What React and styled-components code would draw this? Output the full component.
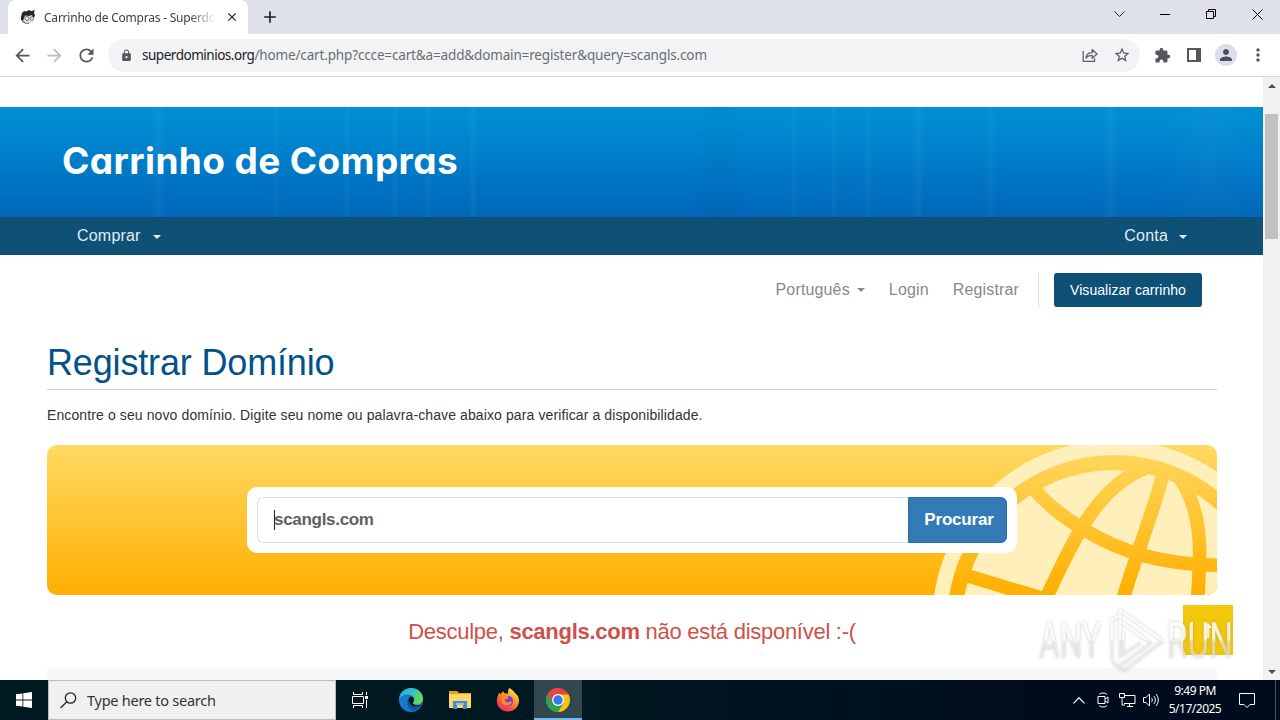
import React from "react";
import styled, { createGlobalStyle } from "styled-components";
import {
  MdArrowBack,
  MdArrowForward,
  MdRefresh,
  MdLock,
  MdStarOutline,
  MdExtension,
  MdPerson,
  MdMoreVert,
  MdAdd,
  MdClose,
} from "react-icons/md";

const GlobalStyle = createGlobalStyle`
  * {
    box-sizing: border-box;
  }
  body {
    margin: 0;
    overflow: hidden;
    background: #fff;
    font-family: "Liberation Sans", Arial, sans-serif;
  }
`;

const Screen = styled.div`
  position: relative;
  width: 1280px;
  height: 720px;
  display: flex;
  flex-direction: column;
  overflow: hidden;
`;

/* browser */
const TitleBar = styled.div`
  height: 34px;
  flex: none;
  display: flex;
  padding-left: 8px;
  background: #dee1e8;
  color: #202124;
`;
const Tab = styled.div`
  width: 240px;
  height: 34px;
  display: flex;
  align-items: center;
  padding-left: 12px;
  background: #fff;
  border-radius: 8px 8px 0 0;
`;
const TabTitle = styled.div`
  width: 172px;
  margin-left: 8px;
  white-space: nowrap;
  font-family: "Noto Sans", sans-serif;
  font-size: 12px;
  letter-spacing: -0.22px;
  color: #3c4043;
  -webkit-mask-image: linear-gradient(to right, #000 145px, transparent 172px);
  mask-image: linear-gradient(to right, #000 145px, transparent 172px);
`;
const TabClose = styled.div`
  width: 16px;
  height: 16px;
  margin-left: 8px;
  display: flex;
  align-items: center;
  justify-content: center;
`;
const NewTab = styled.div`
  width: 28px;
  margin-left: 8px;
  display: flex;
  align-items: center;
  justify-content: center;
`;
const WindowButtons = styled.div`
  height: 28px;
  margin-left: auto;
  display: flex;
`;
const WindowButton = styled.div`
  width: 46px;
  display: flex;
  align-items: center;
  justify-content: center;
`;
const Toolbar = styled.div`
  height: 43px;
  flex: none;
  display: flex;
  align-items: center;
  padding: 0 6px;
  background: #fff;
  border-bottom: 1px solid #d9dadd;
`;
const Cell = styled.div`
  width: 32px;
  height: 32px;
  flex: none;
  display: flex;
  align-items: center;
  justify-content: center;
  color: ${(props) => props.$color || "#54575c"};
`;
const AddressBar = styled.div`
  height: 33px;
  flex: 1;
  margin: 0 6px;
  padding-right: 2px;
  display: flex;
  align-items: center;
  border-radius: 17px;
  background: #f1f3f4;
`;
const Lock = styled(Cell)`
  width: 34px;
  padding-left: 2px;
`;
const Url = styled.div`
  flex: 1;
  white-space: nowrap;
  font-family: "Noto Sans", sans-serif;
  font-size: 13.5px;
  letter-spacing: -0.15px;
  color: #6a6e73;

  span {
    letter-spacing: -0.48px;
    color: #202124;
  }
`;
const Avatar = styled.div`
  width: 22px;
  height: 22px;
  display: flex;
  align-items: center;
  justify-content: center;
  border-radius: 50%;
  background: #dcdfe8;
  color: #4b4f66;
`;

/* page */
const Viewport = styled.div`
  height: 603px;
  flex: none;
  display: flex;
`;
const Page = styled.div`
  width: 1263px;
  padding-top: 30px;
  overflow: hidden;
  background: #fff;
`;
const Scrollbar = styled.div`
  width: 17px;
  display: flex;
  flex-direction: column;
  align-items: center;
  background: #f1f1f1;
`;
const ScrollArrow = styled.div`
  height: 17px;
  display: flex;
  align-items: center;
`;
const Thumb = styled.div`
  width: 13px;
  height: 125px;
  margin-top: 20px;
  margin-bottom: auto;
  background: #c1c1c1;
`;
const Hero = styled.div`
  height: 110px;
  padding: 27px 62px;
  background:
    linear-gradient(to right, transparent 150px, #ffffff08 156px, #ffffff08 160px, transparent 166px, transparent 272px, #ffffff09 276px, transparent 280px, transparent 344px, #ffffff0a 347px, transparent 350px, transparent 392px, #ffffff0b 395px, transparent 398px, transparent 424px, #ffffff0a 428px, transparent 432px, transparent 468px, #ffffff0b 473px, transparent 478px, transparent 690px, #00000006 720px, transparent 750px, transparent 790px, #ffffff0a 794px, transparent 798px, transparent 830px, #ffffff0b 834px, transparent 838px, transparent 862px, #ffffff08 868px, transparent 874px, transparent 912px, #ffffff0c 918px, transparent 924px, transparent 984px, #ffffff09 990px, transparent 996px, transparent 1102px, #ffffff0b 1110px, transparent 1118px, transparent 1160px, #ffffff06 1210px, transparent 1263px),
    linear-gradient(to bottom, #0090d3 0%, #0082cc 38%, #0072c2 72%, #0067b7 100%);
`;
const HeroTitle = styled.h1`
  margin: 0;
  font-family: Inter, sans-serif;
  font-size: 37px;
  line-height: 54px;
  font-weight: 700;
  font-feature-settings: "cv11";
  letter-spacing: 0.4px;
  white-space: nowrap;
  color: #fff;
`;
const Nav = styled.div`
  height: 38px;
  display: flex;
  align-items: center;
  justify-content: space-between;
  padding: 0 76px 0 77px;
  background: #0f5077;
`;
const NavItem = styled.div`
  display: flex;
  align-items: center;
  font-size: 16px;
  letter-spacing: 0.2px;
  color: #e2eef5;
`;
const Caret = styled.span`
  margin-left: ${(props) => props.$gap};
  margin-top: ${(props) => props.$drop || "0"};
  border-top: 4px solid;
  border-left: 4px solid transparent;
  border-right: 4px solid transparent;
`;
const Container = styled.div`
  width: 1170px;
  margin-left: 47px;
`;
const UserMenu = styled.div`
  height: 70px;
  display: flex;
  align-items: center;
  justify-content: flex-end;
  padding-right: 15px;
`;
const MenuItem = styled.div`
  display: flex;
  align-items: center;
  margin-right: ${(props) => props.$gap};
  font-size: 16px;
  letter-spacing: 0.15px;
  color: #888;
`;
const Divider = styled.div`
  width: 1px;
  height: 34px;
  background: #ddd;
`;
const CartButton = styled.button`
  width: 148px;
  height: 34px;
  margin-left: 15px;
  padding: 0;
  border: none;
  border-radius: 3px;
  background: #0f5077;
  font-family: inherit;
  font-size: 14px;
  letter-spacing: 0.05px;
  color: #fff;
`;
const Heading = styled.h1`
  height: 65px;
  margin: 0;
  padding-top: 17px;
  border-bottom: 1px solid #ccc;
  font-size: 36px;
  line-height: 41px;
  font-weight: 400;
  letter-spacing: -0.16px;
  color: #02528a;
`;
const Intro = styled.p`
  margin: 15px 0 20px;
  font-size: 14px;
  line-height: 20px;
  letter-spacing: 0.11px;
  color: #333;
`;
const Banner = styled.div`
  position: relative;
  height: 150px;
  display: flex;
  align-items: center;
  justify-content: center;
  border-radius: 10px;
  overflow: hidden;
  background: linear-gradient(to bottom, #ffd963, #ffaf00);
`;
const Globe = styled.svg`
  position: absolute;
  right: 0;
  top: 0;
`;
const SearchBox = styled.div`
  position: relative;
  width: 770px;
  height: 66px;
  display: flex;
  padding: 10px;
  border-radius: 10px;
  background: #fff;
`;
const SearchField = styled.div`
  flex: 1;
  display: flex;
  align-items: center;
  padding-left: 16px;
  border: 1px solid #ddd;
  border-right: none;
  border-radius: 6px 0 0 6px;
  font-size: 17px;
  font-weight: 700;
  letter-spacing: -0.3px;
  color: #606060;
`;
const TextCursor = styled.span`
  width: 1px;
  height: 20px;
  margin-right: -1px;
  background: #222;
`;
const SearchButton = styled.button`
  width: 99px;
  padding: 0 0 0 3px;
  border: 1px solid #2e6da4;
  border-radius: 0 6px 6px 0;
  background: #337ab7;
  font-family: inherit;
  font-size: 17px;
  font-weight: 700;
  letter-spacing: -0.2px;
  color: #fff;
`;
const Result = styled.p`
  margin: 20px 0 0;
  text-align: center;
  font-size: 22px;
  line-height: 34px;
  letter-spacing: -0.27px;
  color: #d0504c;
`;
const Panel = styled.div`
  height: 20px;
  margin-top: 19px;
  background: #f7f7f7;
`;
const BackToTop = styled.div`
  position: absolute;
  left: 1183px;
  top: 605px;
  width: 50px;
  height: 50px;
  display: flex;
  align-items: center;
  justify-content: center;
  background: #f2c70c;
`;
const Watermark = styled.svg`
  position: absolute;
  left: 1030px;
  top: 600px;
  overflow: visible;

  text {
    font-family: Roboto, sans-serif;
    font-size: 50px;
    font-weight: 400;
  }
`;

/* taskbar */
const Taskbar = styled.div`
  height: 40px;
  flex: none;
  display: flex;
  background: linear-gradient(to right, #001a22, #001820 45%, #000b1d 85%);
  font-family: "Noto Sans", sans-serif;
`;
const TaskButton = styled.div`
  width: ${(props) => props.$width || "48px"};
  display: flex;
  align-items: center;
  justify-content: center;
  padding-top: ${(props) => (props.$active ? "2px" : "0")};
  background: ${(props) => (props.$active ? "#33474f" : "transparent")};
  border-bottom: ${(props) => (props.$active ? "2px solid #76b9ed" : "none")};
`;
const SearchBar = styled.div`
  width: 288px;
  display: flex;
  align-items: center;
  padding-left: 11px;
  border: 1px solid #bcbcbc;
  background: #f0f0f0;
  font-size: 14.5px;
  letter-spacing: -0.25px;
  color: #333;

  svg {
    margin-right: 10px;
  }
`;
const Tray = styled.div`
  margin-left: auto;
  display: flex;
`;
const Clock = styled.div`
  width: 64px;
  padding-top: 2px;
  font-size: 12px;
  line-height: 18px;
  letter-spacing: -0.5px;
  text-align: center;
  color: #fff;
`;
const ShowDesktop = styled.div`
  width: 5px;
  margin-left: 8px;
  border-left: 1px solid #4a5260;
`;

const Favicon = () => (
  <svg width="16" height="16" viewBox="0 0 16 16">
    <path d="M3 7l9-1 2 3-1 4-4 2-6-1z" fill="#ead9cc" />
    <path d="M1 8L2 4l2-2 2 .5L9 1l2 1 4-1-1 2 1 4-2 2-1-3-3 1-4-.5L4 9l-1 3-2-1z" fill="#24272b" />
    <circle cx="7" cy="9.5" r="2" fill="#e8f1f7" stroke="#4a5e70" strokeWidth=".8" />
    <circle cx="12" cy="9.5" r="1.7" fill="#e8f1f7" stroke="#4a5e70" strokeWidth=".8" />
    <path d="M2 12l3 2 4 .5" stroke="#637384" strokeWidth="1.2" fill="none" />
  </svg>
);

const ShareIcon = () => (
  <svg width="16" height="16" viewBox="0 0 16 16" fill="none" stroke="#5f6368" strokeWidth="1.3">
    <path d="M1.2 4v10.3h11.3v-3" />
    <path d="M4 11c.4-3.500 2.500-5.300 6.200-5.300V2.500L15 7l-4.800 4.200V8.300C7.500 8.300 5.500 9 4 11z" strokeLinejoin="round" />
  </svg>
);

const GlobeArt = () => (
  <Globe width="287" height="150" viewBox="930 445 287 150">
    <mask id="lines" maskUnits="userSpaceOnUse" x="900" y="430" width="400" height="400">
      <circle cx="1114.2" cy="622" r="152" fill="#fff" />
      <g transform="translate(900 430) scale(.33333)" fill="none" stroke="#000" strokeWidth="41">
        <path d="M385 158C440 225 490 260 550 298C660 365 780 404 960 406" />
        <path d="M750 108C650 145 595 215 545 293C505 360 475 425 438 505" />
        <path d="M790 130C765 230 720 340 668 510" />
        <path d="M800 105C885 170 900 300 899 375C898 425 896 460 893 505" />
        <path d="M185 432L430 506" />
      </g>
    </mask>
    <circle cx="1114.2" cy="622" r="174.500" fill="none" stroke="#fff0bb" strokeWidth="15" />
    <rect x="930" y="445" width="287" height="150" fill="#fff0bb" mask="url(#lines)" />
  </Globe>
);

const WatermarkArt = () => (
  <Watermark width="215" height="80" viewBox="0 0 215 80">
    <defs>
      <linearGradient id="fade" gradientUnits="userSpaceOnUse" x1="0" y1="8" x2="0" y2="72">
        <stop offset=".48" stopColor="#fff" stopOpacity=".8" />
        <stop offset=".54" stopColor="#e6e6e6" stopOpacity=".6" />
      </linearGradient>
      <filter id="glow" x="-20%" y="-20%" width="140%" height="140%">
        <feDropShadow dx="0" dy="0" stdDeviation="1.500" floodColor="#777" floodOpacity=".5" />
      </filter>
    </defs>
    <g filter="url(#glow)" fill="url(#fade)">
      <text x="9" y="58" textLength="62" lengthAdjust="spacingAndGlyphs">ANY</text>
      <text x="137" y="58" textLength="66" lengthAdjust="spacingAndGlyphs">RUN</text>
      <g fill="none" stroke="url(#fade)" strokeWidth="2.500" strokeLinejoin="round">
        <path d="M82 60V20L88 16" />
        <path d="M90 58V10L133 41L94 71L82 62" />
        <path d="M90 21L121 43L90 66" />
        <path d="M93 31V55L110 43" />
      </g>
    </g>
  </Watermark>
);

const EdgeIcon = () => (
  <svg width="24" height="24" viewBox="0 0 24 24">
    <defs>
      <linearGradient id="edgeTop" x1="0" y1="0" x2="1" y2=".4">
        <stop offset="0" stopColor="#2aa7e0" />
        <stop offset=".6" stopColor="#36c5c0" />
        <stop offset="1" stopColor="#62d957" />
      </linearGradient>
    </defs>
    <circle cx="12" cy="12" r="12" fill="#1479cf" />
    <path d="M0 11C1 4 6 0 12 0c7 0 12 5 12 10.500 0 4-3 6-6.500 6-2.500 0-4-1-3.500-2.200.8-1.300 1-2 1-3C15 8.500 12 6.500 8.500 6.500 4.500 6.500 1.500 8.500 0 11z" fill="url(#edgeTop)" />
    <path d="M10 10c-3 3-2.500 9 3 12.500 3-.2 6.500-1.500 9-5-5 2.500-12 1.500-12-7.500z" fill="#11549c" />
    <path d="M15 11.500c0-2.300-2-3.500-3.500-3-2 .8-2.500 4-1 6.500 1.500 2.800 5 4 8 3.500 2-.2 3.500-1 4.500-2-3 1.500-10 1-9-2 .6-1 1-2 1-3z" fill="#001820" />
  </svg>
);

const FolderIcon = () => (
  <svg width="22" height="20" viewBox="0 0 22 20">
    <path d="M0 1h8l2 2h12v4H0z" fill="#e9a01f" />
    <path d="M0 4h22v14H0z" fill="#fcd667" />
    <path d="M4 11h14v8h-4v-4H8v4H4z" fill="#3c8fd0" />
    <path d="M7 13h8v2H7z" fill="#89c8ee" />
  </svg>
);

const FirefoxIcon = () => (
  <svg width="24" height="24" viewBox="0 0 24 24">
    <defs>
      <linearGradient id="fox" x1=".8" y1="0" x2=".2" y2="1">
        <stop offset="0" stopColor="#fff04a" />
        <stop offset=".4" stopColor="#ff9a1f" />
        <stop offset=".75" stopColor="#ff4646" />
        <stop offset="1" stopColor="#f0296d" />
      </linearGradient>
    </defs>
    <path d="M13 0c3 1 4.500 3 6 5 3 2 4 5 4 8-.3 6.300-5 10.500-11 10.500S.8 19 .8 13C.8 9.500 2 7 3.500 4.500l1 2C5.500 4.500 6.500 4 7.500 3l.5 2.500c1.500-.5 3 0 4 .5 0-2 .2-4.500 1-6z" fill="url(#fox)" />
    <circle cx="12" cy="13" r="5.200" fill="#7a42d8" />
    <path d="M6 7c3-.5 5 .5 6.500 2L11 11c-2 0-2.500.7-2 2 .8 1.500 3 2 4.500.8 1-.7 2-.4 2.500.2-1 3-4.500 4.500-7.500 3C5 15.500 4.500 11 6 7z" fill="#ff8b24" />
  </svg>
);

const ChromeIcon = () => (
  <svg width="24" height="24" viewBox="0 0 24 24">
    <path d="M12 12V24A12 12 0 0 1 1.610 6z" fill="#31a350" />
    <path d="M12 6h10.390A12 12 0 0 1 12 24l5.200-9z" fill="#fbc116" />
    <path d="M1.610 6L6.800 15l10.400 0L12 24A12 12 0 0 1 1.610 6z" fill="#31a350" />
    <path d="M12 6.500h10.600A12 12 0 0 0 1.610 6L6.800 15z" fill="#e8453c" />
    <circle cx="12" cy="12" r="5.900" fill="#fff" />
    <circle cx="12" cy="12" r="4.700" fill="#3179ed" />
  </svg>
);

const App = () => {
  return (
    <Screen>
      <GlobalStyle />
      <TitleBar>
        <Tab>
          <Favicon />
          <TabTitle>Carrinho de Compras - Superdo</TabTitle>
          <TabClose>
            <MdClose size={14} />
          </TabClose>
        </Tab>
        <NewTab>
          <MdAdd size={20} />
        </NewTab>
        <WindowButtons>
          <WindowButton>
            <svg width="11" height="7" fill="none" stroke="#222">
              <path d="M.5.5l5 5 5-5" />
            </svg>
          </WindowButton>
          <WindowButton>
            <svg width="10" height="1">
              <path d="M0 0h10v1H0z" />
            </svg>
          </WindowButton>
          <WindowButton>
            <svg width="10" height="10" fill="none" stroke="#000">
              <path d="M.5 2.500h7v7h-7zM2.500 2.500v-2h7v7h-2" />
            </svg>
          </WindowButton>
          <WindowButton>
            <svg width="11" height="11" fill="none" stroke="#000">
              <path d="M.5.5l10 10M10.500.5l-10 10" />
            </svg>
          </WindowButton>
        </WindowButtons>
      </TitleBar>
      <Toolbar>
        <Cell>
          <MdArrowBack size={21} />
        </Cell>
        <Cell $color="#bcbdc0">
          <MdArrowForward size={21} />
        </Cell>
        <Cell>
          <MdRefresh size={21} />
        </Cell>
        <AddressBar>
          <Lock>
            <MdLock size={13} />
          </Lock>
          <Url>
            <span>superdominios.org</span>
            /home/cart.php?ccce=cart&amp;a=add&amp;domain=register&amp;query=scangls.com
          </Url>
          <Cell>
            <ShareIcon />
          </Cell>
          <Cell>
            <MdStarOutline size={18} />
          </Cell>
        </AddressBar>
        <Cell>
          <MdExtension size={17} />
        </Cell>
        <Cell>
          <svg width="14" height="14" fill="#54575c">
            <path d="M0 0h14v14H0zM2 2v10h7V2z" fillRule="evenodd" />
          </svg>
        </Cell>
        <Cell>
          <Avatar>
            <MdPerson size={18} />
          </Avatar>
        </Cell>
        <Cell>
          <MdMoreVert size={20} />
        </Cell>
      </Toolbar>

      <Viewport>
        <Page>
          <Hero>
            <HeroTitle>Carrinho de Compras</HeroTitle>
          </Hero>
          <Nav>
            <NavItem>
              Comprar
              <Caret $gap="12px" $drop="2px" />
            </NavItem>
            <NavItem>
              Conta
              <Caret $gap="11px" $drop="2px" />
            </NavItem>
          </Nav>
          <Container>
            <UserMenu>
              <MenuItem $gap="24px">
                Português
                <Caret $gap="7px" />
              </MenuItem>
              <MenuItem $gap="24px">Login</MenuItem>
              <MenuItem $gap="19px">Registrar</MenuItem>
              <Divider />
              <CartButton>Visualizar carrinho</CartButton>
            </UserMenu>
            <Heading>Registrar Domínio</Heading>
            <Intro>
              Encontre o seu novo domínio. Digite seu nome ou palavra-chave abaixo para verificar a
              disponibilidade.
            </Intro>
            <Banner>
              <GlobeArt />
              <SearchBox>
                <SearchField>
                  <TextCursor />
                  scangls.com
                </SearchField>
                <SearchButton>Procurar</SearchButton>
              </SearchBox>
            </Banner>
            <Result>
              Desculpe, <b>scangls.com</b> não está disponível :-(
            </Result>
            <Panel />
          </Container>
        </Page>
        <Scrollbar>
          <ScrollArrow>
            <svg width="8" height="4" fill="#505050">
              <path d="M0 4l4-4 4 4z" />
            </svg>
          </ScrollArrow>
          <Thumb />
          <ScrollArrow>
            <svg width="8" height="4" fill="#505050">
              <path d="M0 0l4 4 4-4z" />
            </svg>
          </ScrollArrow>
        </Scrollbar>
      </Viewport>

      <BackToTop>
        <svg width="8" height="15" fill="#fff">
          <path d="M4 0l4 5H5.200v10H2.800V5H0z" />
        </svg>
      </BackToTop>
      <WatermarkArt />

      <Taskbar>
        <TaskButton>
          <svg width="16" height="16" fill="#fff">
            <path d="M0 2.300L6.500 1.400v6.200H0zM7.300 1.300L16 0v7.600H7.300zM0 8.400h6.500v6.200L0 13.700zM7.300 8.400H16V16l-8.700-1.300z" />
          </svg>
        </TaskButton>
        <SearchBar>
          <svg width="17" height="17" fill="none" stroke="#222" strokeWidth="1.300">
            <circle cx="10.500" cy="6" r="5.200" />
            <path d="M6.800 9.800L.6 16" />
          </svg>
          Type here to search
        </SearchBar>
        <TaskButton>
          <svg width="17" height="16" fill="none" stroke="#fff">
            <path d="M1.500 0v2.500h9V0M1.500 16v-2.500h9V16M.5 4.500h11v7H.5zM14.500 0v3M14.500 8v8" />
            <path d="M13 4h3v3h-3z" fill="#fff" stroke="none" />
          </svg>
        </TaskButton>
        <TaskButton $width="54px">
          <EdgeIcon />
        </TaskButton>
        <TaskButton $width="44px">
          <FolderIcon />
        </TaskButton>
        <TaskButton $width="52px">
          <FirefoxIcon />
        </TaskButton>
        <TaskButton $active>
          <ChromeIcon />
        </TaskButton>
        <Tray>
          <TaskButton $width="24px">
            <svg width="12" height="7" fill="none" stroke="#fff" strokeWidth="1.200">
              <path d="M.5 6.300L6 .8l5.500 5.500" />
            </svg>
          </TaskButton>
          <TaskButton $width="24px">
            <svg width="12" height="16" fill="none" stroke="#fff">
              <path d="M2 2.500C4 .5 8 .5 10 2.500M2 13.500c2 2 6 2 8 0M1 4.500h7v7H1zM8 7l3-2v6L8 9" />
            </svg>
          </TaskButton>
          <TaskButton $width="24px">
            <svg width="17" height="14" fill="none" stroke="#fff">
              <path d="M5 2.500h11v8H5M8 13.500h6M10.500 10.500v3M.5.500h5v4h-5zM3 4.500v7.500h3" />
            </svg>
          </TaskButton>
          <TaskButton $width="24px">
            <svg width="17" height="14" fill="none" stroke="#fff">
              <path d="M.5 4.500h2.500l3.500-3.500v12L3 9.500H.5zM8.500 4.800c1 1.300 1 3.200 0 4.500M10.800 3c2 2.300 2 5.800 0 8M13 1c3 3.500 3 8.500 0 12" />
            </svg>
          </TaskButton>
          <Clock>
            9:49 PM
            <br />
            5/17/2025
          </Clock>
          <TaskButton $width="40px">
            <svg width="17" height="17" fill="none" stroke="#fff">
              <path d="M.5 1.500h15v11h-4.500L8 15.500l-3-3H.5z" />
            </svg>
          </TaskButton>
          <ShowDesktop />
        </Tray>
      </Taskbar>
    </Screen>
  );
};

export default App;
